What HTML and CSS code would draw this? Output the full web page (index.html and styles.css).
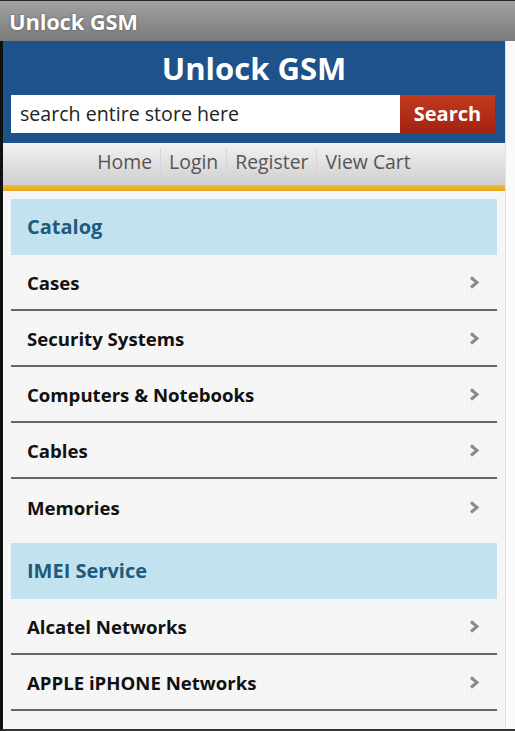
FILE: index.html
```html
<!DOCTYPE html>
<html>
<head>
<meta charset="utf-8">
<link rel="stylesheet" href="styles.css">
</head>
<body>
<div class="statusbar"><span class="app-title">Unlock GSM</span></div>
<div class="page">
  <div class="main">
    <header class="header">
      <h1 class="site-title">Unlock GSM</h1>
      <form class="search">
        <div class="search-input">search entire store here</div>
        <div class="search-btn">Search</div>
      </form>
    </header>
    <nav class="nav">
      <span class="nav-item">Home</span>
      <span class="nav-item">Login</span>
      <span class="nav-item">Register</span>
      <span class="nav-item">View Cart</span>
    </nav>
    <div class="gold"></div>
    <div class="content">
      <div class="group">
        <div class="group-head">Catalog</div>
        <div class="item"><span>Cases</span><svg class="chev" viewBox="0 0 12 14"><path d="M3 2 L9 7 L3 12" /></svg></div>
        <div class="item"><span>Security Systems</span><svg class="chev" viewBox="0 0 12 14"><path d="M3 2 L9 7 L3 12" /></svg></div>
        <div class="item"><span>Computers &amp; Notebooks</span><svg class="chev" viewBox="0 0 12 14"><path d="M3 2 L9 7 L3 12" /></svg></div>
        <div class="item"><span>Cables</span><svg class="chev" viewBox="0 0 12 14"><path d="M3 2 L9 7 L3 12" /></svg></div>
        <div class="item last"><span>Memories</span><svg class="chev" viewBox="0 0 12 14"><path d="M3 2 L9 7 L3 12" /></svg></div>
      </div>
      <div class="group">
        <div class="group-head">IMEI Service</div>
        <div class="item"><span>Alcatel Networks</span><svg class="chev" viewBox="0 0 12 14"><path d="M3 2 L9 7 L3 12" /></svg></div>
        <div class="item"><span>APPLE iPHONE Networks</span><svg class="chev" viewBox="0 0 12 14"><path d="M3 2 L9 7 L3 12" /></svg></div>
      </div>
    </div>
  </div>
  <div class="rail"></div>
</div>
</body>
</html>
```
FILE: styles.css
```css
html, body {
  margin: 0;
  padding: 0;
  height: 100%;
  overflow: hidden;
  background: #f4f4f4;
  font-family: "Open Sans", "DejaVu Sans", sans-serif;
}
.statusbar {
  height: 41px;
  border-top: 1px solid #222;
  background: linear-gradient(#a2a2a2, #7a7a7a);
  display: flex;
  align-items: center;
  padding-left: 9px;
  padding-bottom: 1px;
  box-sizing: border-box;
}
.app-title {
  color: #fff;
  font-weight: 700;
  font-size: 22px;
  letter-spacing: -0.2px;
  text-shadow: 0 0 2px #444;
}
.page {
  display: flex;
  height: 690px;
  border-left: 3px solid #111;
  border-bottom: 2px solid #333;
  box-sizing: border-box;
}
.main {
  width: 502px;
  display: flex;
  flex-direction: column;
  background: #f6f6f6;
}
.rail {
  flex: 1;
  background: #fafafa;
  border-left: 1px solid #e2e2e2;
}
.header {
  background: #1d528a;
  height: 102px;
  box-sizing: border-box;
  padding-top: 7px;
}
.site-title {
  margin: 0;
  text-align: center;
  color: #fff;
  font-size: 31px;
  font-weight: 700;
  line-height: 40px;
  letter-spacing: 0;
}
.search {
  display: flex;
  margin: 7px 10px 0 8px;
  height: 38px;
}
.search-input {
  flex: 1;
  background: #fff;
  color: #222;
  font-size: 19.6px;
  line-height: 38px;
  padding-left: 9px;
}
.search-btn {
  width: 95px;
  background: linear-gradient(#c23a1e, #a32210);
  color: #fff;
  font-weight: 700;
  font-size: 20px;
  text-align: center;
  line-height: 38px;
}
.nav {
  height: 42px;
  background: linear-gradient(#f2f2f2, #cfcfcf);
  display: flex;
  justify-content: center;
  align-items: center;
  padding-bottom: 5px;
  box-sizing: border-box;
}
.nav-item {
  color: #555;
  font-size: 19.4px;
  padding: 0 8px;
  line-height: 26px;
  border-left: 1px solid #d4d4d4;
}
.nav-item:first-child {
  border-left: none;
}
.gold {
  height: 6px;
  background: linear-gradient(#f2bb32, #e2a51e);
}
.content {
  padding: 8px 8px 0 8px;
  background: repeating-linear-gradient(90deg, #f7f7f7 0 3px, #f2f2f2 3px 4px);
  flex: 1;
}
.group {
  margin-bottom: 8px;
}
.group-head {
  background: #c3e2f0;
  color: #1e5a7c;
  font-weight: 700;
  font-size: 20px;
  height: 56px;
  line-height: 56px;
  padding-left: 16px;
}
.item {
  height: 56px;
  display: flex;
  align-items: center;
  justify-content: space-between;
  padding: 0 17px 0 16px;
  border-bottom: 2px solid #666;
  box-sizing: border-box;
  color: #111;
  font-weight: 700;
  font-size: 18.6px;
}
.item.last {
  border-bottom: none;
}
.chev {
  width: 12px;
  height: 15px;
  fill: none;
  stroke: #8a8a8a;
  stroke-width: 3;
}
```
